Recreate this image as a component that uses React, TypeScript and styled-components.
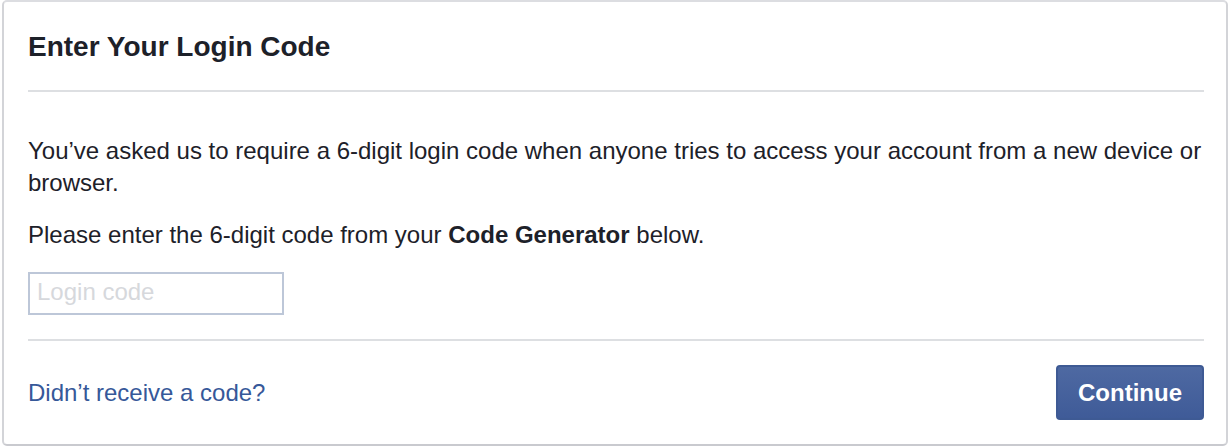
import React from "react";
import styled, { createGlobalStyle } from "styled-components";

const GlobalStyle = createGlobalStyle`
  html, body {
    margin: 0;
    padding: 0;
    background: #ffffff;
  }
  body {
    font-family: "Liberation Sans", Helvetica, Arial, sans-serif;
    color: #1d2129;
  }
  * { box-sizing: border-box; }
`;

const Card = styled.div`
  margin: 0 0 0 2px;
  width: 1226px;
  height: 446px;
  background: #fff;
  border: 2px solid #d3d4d8;
  border-top-color: #dcdde1;
  border-bottom-color: #c9cacf;
  border-radius: 5px;
  display: flex;
  flex-direction: column;
`;

const Header = styled.div`
  margin: 0 22px 0 24px;
  padding: 27px 0 25px 0;
  border-bottom: 2px solid #dddfe2;
`;

const Title = styled.h2`
  margin: 0;
  font-size: 28px;
  line-height: 36px;
  font-weight: bold;
  color: #1d2129;
`;

const Body = styled.div`
  margin: 0 22px 0 24px;
  padding: 43px 0 24px;
  border-bottom: 2px solid #dddfe2;
  display: flex;
  flex-direction: column;
  gap: 20px;
`;

const Paragraph = styled.p`
  margin: 0;
  font-size: 24px;
  line-height: 32px;
  color: #1d2129;
`;

const CodeInput = styled.input`
  margin-top: 1px;
  width: 256px;
  height: 43px;
  border: 2px solid #bdc7d8;
  padding: 0 7px 4px;
  font-family: "Liberation Sans", Helvetica, Arial, sans-serif;
  font-size: 24px;
  color: #1d2129;
  caret-color: #000;
  outline: none;
  &::placeholder {
    color: #d6d8dc;
  }
`;

const Footer = styled.div`
  margin: 0 22px 0 24px;
  padding: 24px 0;
  display: flex;
  align-items: center;
  justify-content: space-between;
`;

const Link = styled.a`
  font-size: 24px;
  line-height: 32px;
  color: #365899;
  text-decoration: none;
  cursor: pointer;
  margin-top: 1px;
`;

const Button = styled.button`
  width: 148px;
  height: 55px;
  border: 2px solid #3e5a94;
  border-radius: 4px;
  background: linear-gradient(#4e69a2, #3f5b98);
  color: #fff;
  font-family: "Liberation Sans", Helvetica, Arial, sans-serif;
  font-size: 24px;
  font-weight: bold;
  cursor: pointer;
  padding: 0;
`;

export default function App() {
  return (
    <>
      <GlobalStyle />
      <Card>
        <Header>
          <Title>Enter Your Login Code</Title>
        </Header>
        <Body>
          <Paragraph>
            You’ve asked us to require a 6-digit login code when anyone tries to access your account from a new device or browser.
          </Paragraph>
          <Paragraph>
            Please enter the 6-digit code from your <strong>Code Generator</strong> below.
          </Paragraph>
          <CodeInput type="text" placeholder="Login code" autoFocus />
        </Body>
        <Footer>
          <Link>Didn’t receive a code?</Link>
          <Button>Continue</Button>
        </Footer>
      </Card>
    </>
  );
}
